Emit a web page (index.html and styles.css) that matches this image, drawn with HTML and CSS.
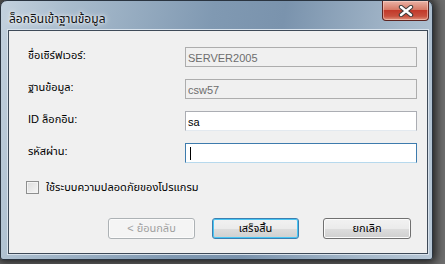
FILE: index.html
```html
<!DOCTYPE html>
<html lang="th">
<head>
    <meta charset="UTF-8">
    <title>ล็อกอินเข้าฐานข้อมูล</title>
    <link rel="stylesheet" href="styles.css">
</head>
<body>

<div class="window">
    <div class="titlebar">
        <span class="title">ล็อกอินเข้าฐานข้อมูล</span>
        <div class="close">
            <svg width="16" height="12" viewBox="0 0 16 12">
                <path d="M3 2 L13 10 M13 2 L3 10" stroke="#3a3a3a" stroke-width="4.4" stroke-linecap="round"/>
                <path d="M3 2 L13 10 M13 2 L3 10" stroke="#ffffff" stroke-width="2.4" stroke-linecap="round"/>
            </svg>
        </div>
    </div>
    <div class="client">
        <form class="fields">
            <label>ชื่อเซิร์ฟเวอร์:</label>
            <input type="text" class="box readonly" value="SERVER2005" readonly>
            <label>ฐานข้อมูล:</label>
            <input type="text" class="box readonly" value="csw57" readonly>
            <label>ID ล็อกอิน:</label>
            <input type="text" class="box" value="sa">
            <label>รหัสผ่าน:</label>
            <div class="box focus"><span class="caret"></span></div>
        </form>

        <div class="check">
            <span class="checkbox"></span>
            <span>ใช้ระบบความปลอดภัยของโปรแกรม</span>
        </div>

        <div class="buttons">
            <button class="btn disabled">&lt; ย้อนกลับ</button>
            <button class="btn default">เสร็จสิ้น</button>
            <button class="btn cancel">ยกเลิก</button>
        </div>
    </div>
</div>

</body>
</html>
```

FILE: styles.css
```css
body {
    margin: 0;
    width: 445px;
    height: 264px;
    overflow: hidden;
    background: #6e6e6e;
    font-family: "Liberation Sans", "Noto Sans Thai", "Noto Sans", sans-serif;
    font-size: 11px;
}
.window {
    box-sizing: border-box;
    width: 433px;
    height: 260px;
    border: 1px solid #2a3440;
    border-radius: 7px 7px 3px 3px;
    background: linear-gradient(100deg, #c3d1de 0%, #a9bccd 14%, #8099b2 45%, #7a93ad 60%, #a5b8ca 85%, #b7c7d6 100%);
    box-shadow: 0 0 10px 3px rgba(20, 20, 20, 0.85);
    display: flex;
    flex-direction: column;
    padding: 0 4px 5px 7px;
}
.titlebar {
    height: 29px;
    display: flex;
    justify-content: space-between;
    align-items: flex-start;
}
.title {
    margin-top: 9px;
    margin-left: 1px;
    font-size: 12px;
    color: #101010;
    text-shadow: 0 0 6px #ffffff, 0 0 3px #ffffff;
}
.close {
    width: 45px;
    height: 19px;
    margin-right: -1px;
    border: 1px solid #5c2420;
    border-top: none;
    border-radius: 0 0 4px 4px;
    background: linear-gradient(#eab3a6 0%, #d77a67 45%, #c2392a 50%, #c8503e 80%, #e0937d 100%);
    display: flex;
    align-items: center;
    justify-content: center;
    box-shadow: inset 0 0 0 1px rgba(255, 220, 210, 0.5);
}
.client {
    flex: 1;
    background: #f0f0f0;
    border: 1px solid #3e4a58;
    box-shadow: 0 0 0 1px #d8e2ec;
    padding: 16px 10px 0 19px;
    color: #000;
}
.fields {
    display: grid;
    grid-template-columns: 157px 232px;
    row-gap: 12px;
    margin: 0;
}
.fields label {
    align-self: center;
    margin-top: -4px;
}
.box {
    box-sizing: border-box;
    width: 232px;
    height: 20px;
    margin: 0;
    padding: 1px 2px 0;
    border: 1px solid #abadb3;
    border-bottom-color: #e3e9ef;
    background: #fff;
    font-family: inherit;
    font-size: 11px;
    color: #000;
    outline: none;
}
.readonly {
    background: #f0f0f0;
    border-color: #adadad;
    color: #6d6d6d;
}
.focus {
    border-color: #3d7bad;
    border-bottom-color: #b7d9ed;
    display: flex;
    align-items: center;
}
.caret {
    width: 1px;
    height: 13px;
    background: #000;
    margin-left: 2px;
}
.check {
    display: flex;
    align-items: center;
    gap: 7px;
    margin-top: 16px;
    margin-left: -2px;
}
.checkbox {
    width: 11px;
    height: 11px;
    border: 1px solid #8e8f8f;
    background: linear-gradient(135deg, #dcdcdc, #f6f6f6);
    box-shadow: inset 0 0 0 1px #f4f4f4;
}
.buttons {
    display: flex;
    justify-content: flex-end;
    margin-top: 22px;
}
.btn {
    height: 21px;
    padding: 0;
    border: 1px solid #707070;
    border-radius: 3px;
    background: linear-gradient(#f2f2f2 0%, #ebebeb 50%, #dddddd 51%, #cfcfcf 100%);
    font-family: inherit;
    font-size: 11px;
    color: #000;
    box-shadow: inset 0 0 0 1px #fbfbfb;
}
.disabled {
    width: 87px;
    margin-right: 17px;
    border-color: #adb2b5;
    background: #f4f4f4;
    color: #a0a0a0;
}
.default {
    width: 87px;
    margin-right: 24px;
    border-color: #3c7fb1;
    box-shadow: inset 0 0 0 1px #48c6f4;
}
.cancel {
    width: 88px;
    margin-right: 6px;
}
```
